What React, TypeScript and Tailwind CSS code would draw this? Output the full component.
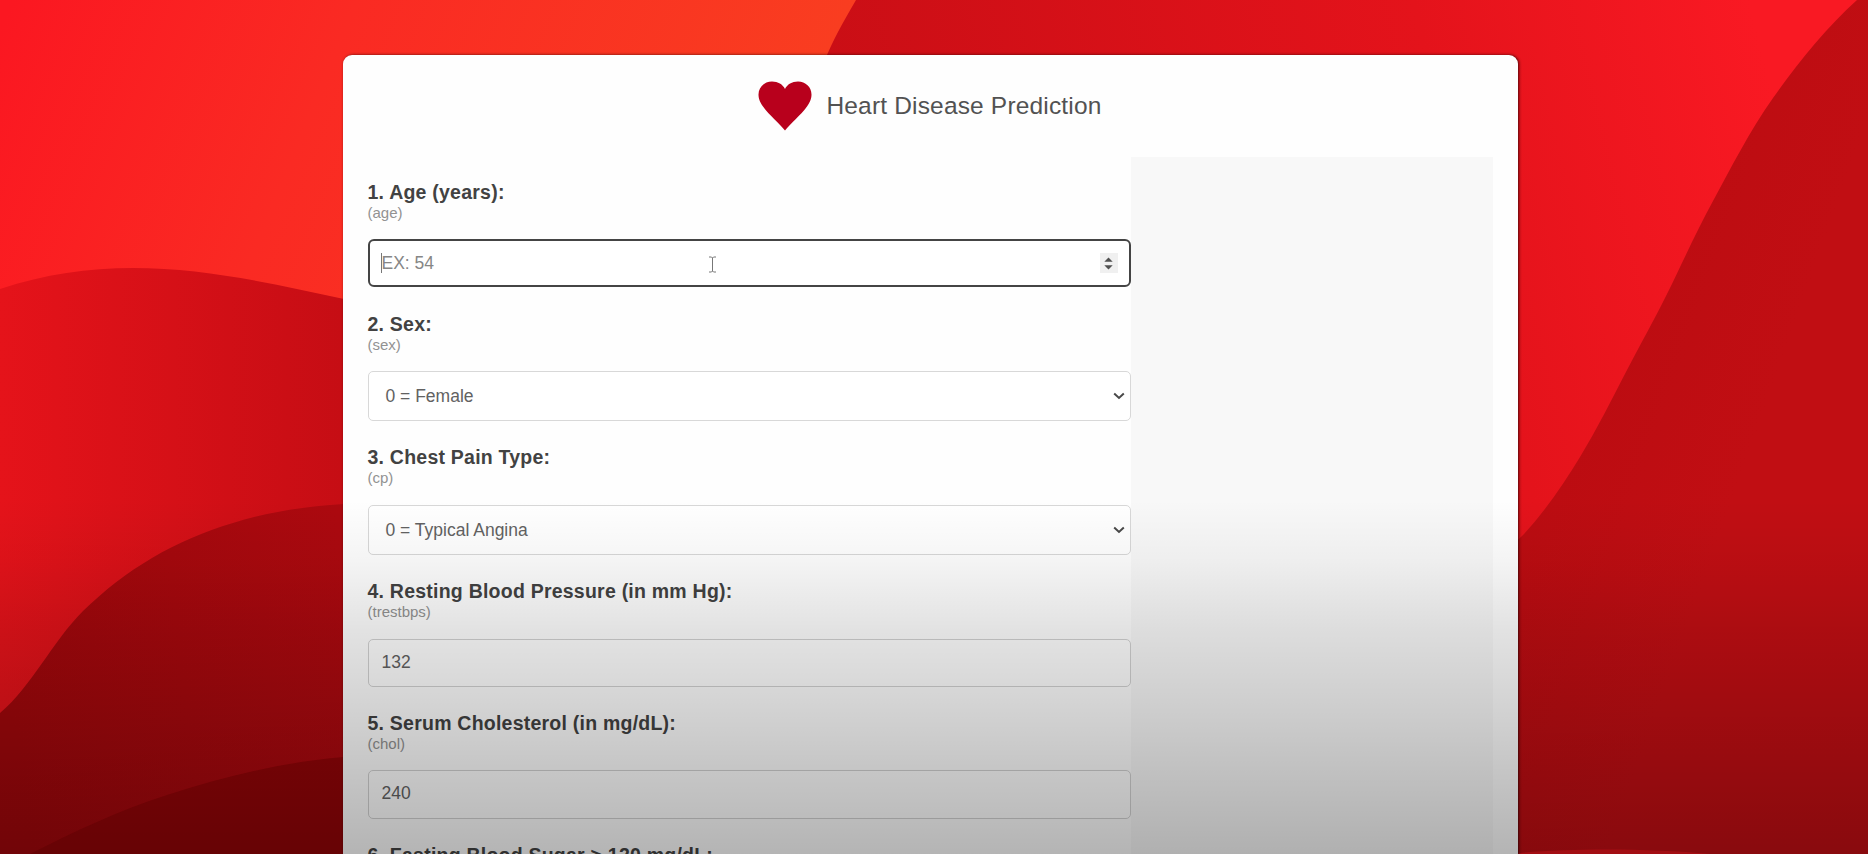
import React from "react";

type Field = {
  label: string;
  name: string;
  kind: "number" | "select" | "text";
  value?: string;
  placeholder?: string;
  block: string;
  control: string;
};

const fields: Field[] = [
  { label: "1. Age (years):", name: "age", kind: "number", placeholder: "EX: 54", block: "h-[132px]", control: "mt-[13px] h-12" },
  { label: "2. Sex:", name: "sex", kind: "select", value: "0 = Female", block: "h-[133px]", control: "mt-[13px] h-[50px]" },
  { label: "3. Chest Pain Type:", name: "cp", kind: "select", value: "0 = Typical Angina", block: "h-[134px]", control: "mt-[14px] h-[50px]" },
  { label: "4. Resting Blood Pressure (in mm Hg):", name: "trestbps", kind: "text", value: "132", block: "h-[132px]", control: "mt-[14px] h-12" },
  { label: "5. Serum Cholesterol (in mg/dL):", name: "chol", kind: "text", value: "240", block: "h-[132px]", control: "mt-[13px] h-[49px]" },
  { label: "6. Fasting Blood Sugar > 120 mg/dL:", name: "fbs", kind: "select", value: "0 = False", block: "h-[132px]", control: "mt-[14px] h-[50px]" },
];

function Backdrop() {
  return (
    <svg className="absolute inset-0 h-full w-full" viewBox="0 0 1868 854" preserveAspectRatio="none">
      <defs>
        <linearGradient id="sky" gradientUnits="userSpaceOnUse" x1="0" y1="30" x2="740" y2="330">
          <stop offset="0" stopColor="#fb1721" />
          <stop offset="0.4" stopColor="#fa2a23" />
          <stop offset="1" stopColor="#f93e20" />
        </linearGradient>
        <linearGradient id="ridge" gradientUnits="userSpaceOnUse" x1="850" y1="260" x2="1760" y2="40">
          <stop offset="0" stopColor="#c90e15" />
          <stop offset="0.65" stopColor="#e4131b" />
          <stop offset="1" stopColor="#f91923" />
        </linearGradient>
        <linearGradient id="slope" gradientUnits="userSpaceOnUse" x1="1530" y1="0" x2="1868" y2="120">
          <stop offset="0" stopColor="#b60a0f" />
          <stop offset="1" stopColor="#c10e13" />
        </linearGradient>
        <linearGradient id="hill" gradientUnits="userSpaceOnUse" x1="0" y1="0" x2="343" y2="0">
          <stop offset="0" stopColor="#e5131a" />
          <stop offset="1" stopColor="#c60d14" />
        </linearGradient>
        <linearGradient id="dune" gradientUnits="userSpaceOnUse" x1="0" y1="600" x2="343" y2="560">
          <stop offset="0" stopColor="#a0070b" />
          <stop offset="1" stopColor="#ac090f" />
        </linearGradient>
      </defs>
      <rect width="1868" height="854" fill="url(#sky)" />
      <path d="M856 0C842 24 832 42 825 60C800 140 700 300 340 420L340 854H1868V0Z" fill="url(#ridge)" />
      <path d="M1857 0C1826 28 1797 64 1773 98C1749 132 1731 168 1713 201C1695 234 1681 266 1667 294C1653 322 1641 343 1627 370C1613 397 1597 429 1580 457C1563 485 1543 514 1522 536L1500 556V854H1868V0Z" fill="url(#slope)" />
      <path d="M1510 854C1560 848 1650 848 1710 854Z" fill="#e5131a" />
      <path d="M0 289C45 274 88 268 133 268C205 268 275 284 344 299V854H0Z" fill="url(#hill)" />
      <path d="M0 713C32 686 52 642 83 611C125 570 175 540 233 523C268 512 307 506 344 504V854H0Z" fill="url(#dune)" />
      <path d="M30 854C74 832 119 810 167 795C226 776 283 762 344 757V854Z" fill="#910407" />
    </svg>
  );
}

function Spinner() {
  return (
    <span className="flex h-5 w-[18px] shrink-0 items-center justify-center bg-[#f0f0f0]">
      <svg width="9" height="13" viewBox="0 0 9 13" fill="#505050">
        <path d="M4.5 0.5L8.7 4.8H0.3Z" />
        <path d="M4.5 12.5L0.3 8.2H8.7Z" />
      </svg>
    </span>
  );
}

function Control({ field }: { field: Field }) {
  if (field.kind === "number") {
    return (
      <div className={`flex items-center rounded-[6px] border-2 border-[#444] bg-white pr-[11px] pl-[11px] ${field.control}`}>
        <span className="h-5 w-px bg-[#777]" />
        <input
          className="min-w-0 flex-1 bg-transparent text-[17.5px] text-[#555] outline-none placeholder:text-[#868686]"
          name={field.name}
          placeholder={field.placeholder}
        />
        <Spinner />
      </div>
    );
  }
  if (field.kind === "select") {
    return (
      <div className={`flex items-center justify-between rounded-[5px] border border-[#d8d8d8] bg-white pr-[5px] pl-[17px] text-[17.5px] text-[#626262] ${field.control}`}>
        <span>{field.value}</span>
        <svg width="12" height="8" viewBox="0 0 12 8" fill="none" stroke="#484848" strokeWidth="2">
          <path d="M1.2 1.5L6 5.9L10.8 1.5" />
        </svg>
      </div>
    );
  }
  return (
    <input
      className={`block w-full rounded-[5px] border border-[#d2d2d2] bg-white px-[13px] pb-0.5 text-[17.5px] text-[#626262] outline-none ${field.control}`}
      name={field.name}
      defaultValue={field.value}
    />
  );
}

export default function App() {
  return (
    <div className="relative h-[854px] w-full overflow-hidden bg-[#d01018] font-['Liberation_Sans',Arial,sans-serif]">
      <Backdrop />
      <main className="relative mx-auto mt-[55px] h-[900px] w-[1175px] -translate-x-[4px] rounded-t-[9px] bg-[#fefefe] px-[25px] shadow-[1px_0_3px_0_rgba(30,0,0,0.75)]">
        <header className="flex h-[102px] items-center justify-center gap-[14px]">
          <svg className="-mt-px h-[50px] w-[54px]" viewBox="0 0 54 50" fill="#b8001c">
            <path d="M27 49.5C22 43 11 34 5 25.5C1.5 20.5 0.5 17 0.5 13.5C0.5 6 6.5 0.5 14 0.5C20 0.5 24.8 3.4 27 8C29.2 3.4 34 0.5 40 0.5C47.5 0.5 53.5 6 53.5 13.5C53.5 17 52.5 20.5 49 25.5C43 34 32 43 27 49.5Z" />
          </svg>
          <h1 className="text-[24.5px] leading-8 tracking-[0.17px] text-[#525252]">Heart Disease Prediction</h1>
        </header>
        <div className="flex h-[800px]">
          <form className="w-[763px] shrink-0 pt-[23px]">
            {fields.map((field) => (
              <div key={field.name} className={field.block}>
                <label className="block h-6 text-[19.5px] leading-6 font-bold tracking-[0.23px] text-[#424242]">{field.label}</label>
                <small className="block h-[22px] text-[15px] leading-[18px] text-[#929292]">({field.name})</small>
                <Control field={field} />
              </div>
            ))}
          </form>
          <aside className="flex-1 bg-[#f8f8f8]" />
        </div>
      </main>
      <svg className="pointer-events-none absolute top-[256px] left-[708px]" width="9" height="17" viewBox="0 0 9 17" fill="none" stroke="#777" strokeWidth="1">
        <path d="M1 1H3.5L4.5 2L5.5 1H8M4.5 2V15M1 16H3.5L4.5 15L5.5 16H8" />
      </svg>
      <div className="pointer-events-none absolute inset-0 bg-[linear-gradient(to_bottom,rgba(0,0,0,0)_500px,rgba(0,0,0,0.04)_560px,rgba(0,0,0,0.11)_630px,rgba(0,0,0,0.165)_700px,rgba(0,0,0,0.225)_770px,rgba(0,0,0,0.29)_854px)]" />
    </div>
  );
}
